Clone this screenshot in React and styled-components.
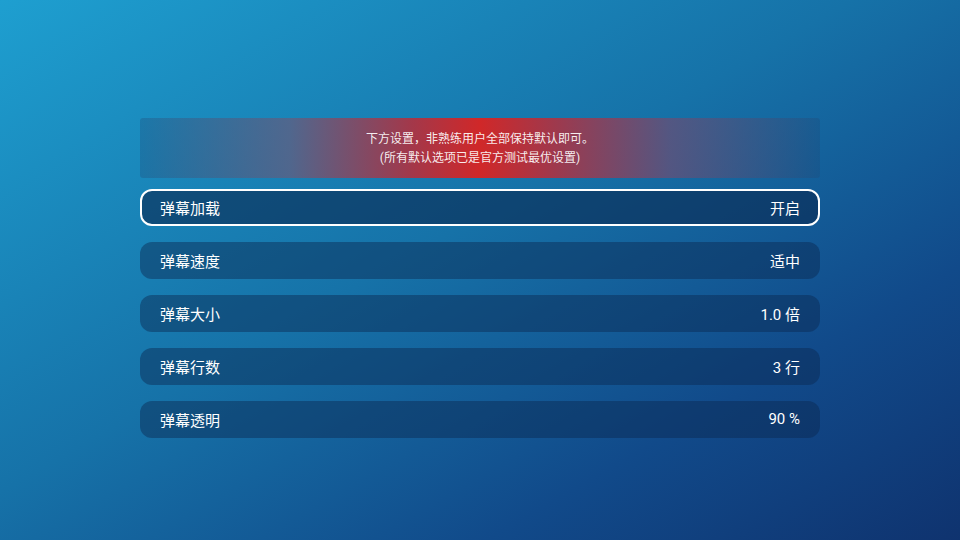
import React from 'react';
import styled, { createGlobalStyle } from 'styled-components';

const GlobalStyle = createGlobalStyle`
  html, body {
    margin: 0;
    padding: 0;
    width: 960px;
    height: 540px;
    overflow: hidden;
  }
  body {
    font-family: 'Roboto', 'Noto Sans CJK SC', sans-serif;
    color: #fff;
  }
`;

const Screen = styled.div`
  width: 960px;
  height: 540px;
  box-sizing: border-box;
  padding-top: 118px;
  background: linear-gradient(150deg, #1e9fd0 0%, #1672a8 45%, #114a8a 75%, #0f336f 100%);
  display: flex;
  flex-direction: column;
  align-items: center;
`;

const Panel = styled.div`
  width: 680px;
  display: flex;
  flex-direction: column;
`;

const Notice = styled.div`
  height: 60px;
  box-sizing: border-box;
  padding-top: 2px;
  border-radius: 3px;
  margin-bottom: 11px;
  background: linear-gradient(
    to right,
    rgba(30, 70, 115, 0.3) 0%,
    rgba(95, 95, 130, 0.78) 22%,
    rgba(175, 50, 65, 0.92) 40%,
    rgba(212, 38, 38, 0.98) 50%,
    rgba(175, 50, 65, 0.92) 60%,
    rgba(100, 80, 120, 0.78) 78%,
    rgba(30, 70, 115, 0.3) 100%
  );
  display: flex;
  flex-direction: column;
  align-items: center;
  justify-content: center;
  font-size: 12px;
  line-height: 19px;
  color: rgba(255, 255, 255, 0.92);
`;

const List = styled.div`
  display: flex;
  flex-direction: column;
  gap: 16px;
`;

const Row = styled.div`
  height: 37px;
  box-sizing: border-box;
  border-radius: 12px;
  padding: 0 18px 1px;
  display: flex;
  align-items: center;
  justify-content: space-between;
  font-size: 15px;
  background: ${({ $focused }) =>
    $focused ? 'rgba(10, 40, 80, 0.6)' : 'rgba(10, 40, 80, 0.45)'};
  border: 2px solid ${({ $focused }) => ($focused ? '#fff' : 'transparent')};
`;

const Label = styled.span``;

const Value = styled.span``;

const settings = [
  { label: '弹幕加载', value: '开启' },
  { label: '弹幕速度', value: '适中' },
  { label: '弹幕大小', value: '1.0 倍' },
  { label: '弹幕行数', value: '3 行' },
  { label: '弹幕透明', value: '90 %' },
];

export default function App() {
  return (
    <>
      <GlobalStyle />
      <Screen>
        <Panel>
          <Notice>
            <div>下方设置，非熟练用户全部保持默认即可。</div>
            <div>(所有默认选项已是官方测试最优设置)</div>
          </Notice>
          <List>
            {settings.map((s, i) => (
              <Row key={s.label} $focused={i === 0}>
                <Label>{s.label}</Label>
                <Value>{s.value}</Value>
              </Row>
            ))}
          </List>
        </Panel>
      </Screen>
    </>
  );
}
